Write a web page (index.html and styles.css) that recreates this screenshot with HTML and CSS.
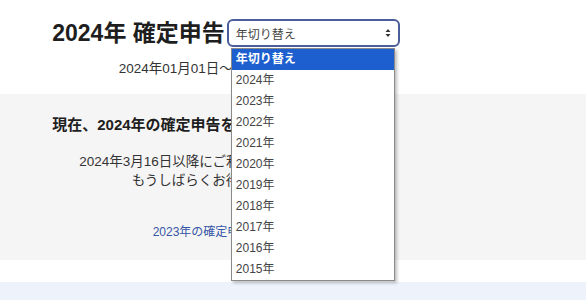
FILE: index.html
```html
<!DOCTYPE html>
<html lang="ja">
<head>
    <meta charset="UTF-8">
    <meta name="viewport" content="width=device-width, initial-scale=1.0">
    <title>2024年 確定申告</title>
    <link rel="stylesheet" href="styles.css">
</head>
<body>
    <div class="page">
        <!-- Header -->
        <div class="head">
            <div class="column">
                <div class="title-row">
                    <h1>2024年 確定申告</h1>
                    <div class="year-select">
                        <span class="year-select-label">年切り替え</span>
                        <svg class="year-select-arrow" width="6" height="10" viewBox="0 0 6 10">
                            <path d="M3 1 L5.5 4 L0.5 4 Z M3 9 L5.5 6 L0.5 6 Z" fill="#333"/>
                        </svg>
                        <ul class="year-menu">
                            <li class="selected">年切り替え</li>
                            <li>2024年</li>
                            <li>2023年</li>
                            <li>2022年</li>
                            <li>2021年</li>
                            <li>2020年</li>
                            <li>2019年</li>
                            <li>2018年</li>
                            <li>2017年</li>
                            <li>2016年</li>
                            <li>2015年</li>
                        </ul>
                    </div>
                </div>
                <p class="period">2024年01月01日～2024年12月31日</p>
            </div>
        </div>

        <!-- Notice -->
        <div class="notice">
            <div class="column">
                <h2>現在、2024年の確定申告を受け付けておりません。</h2>
                <p class="notice-text">2024年3月16日以降にご利用が可能となります。<br>もうしばらくお待ちください。</p>
                <a class="prev-link" href="#">2023年の確定申告はこちら</a>
            </div>
        </div>

        <div class="spacer"></div>
        <div class="band"></div>
    </div>
</body>
</html>
```

FILE: styles.css
```css
* { margin: 0; padding: 0; box-sizing: border-box; }

body {
    font-family: "Liberation Sans", "Noto Sans CJK JP", sans-serif;
    background: #fff;
    color: #222;
}

.column {
    width: 452px;
    text-align: center;
}

.head {
    padding: 19px 0 17px;
}

.title-row {
    display: flex;
    justify-content: center;
    align-items: center;
    gap: 2px;
}

.title-row h1 {
    font-size: 23px;
    font-weight: bold;
    line-height: 28px;
    color: #1e1e1e;
}

.year-select {
    position: relative;
    width: 173px;
    height: 28px;
    border: 2px solid #4a5f99;
    border-radius: 6px;
    background: #fff;
    display: flex;
    align-items: center;
    padding: 0 7px;
    text-align: left;
}

.year-select-label {
    flex: 1;
    font-size: 12px;
    color: #444;
}

.year-select-arrow {
    display: block;
}

.year-menu {
    position: absolute;
    top: 27px;
    left: 2px;
    width: 164px;
    list-style: none;
    background: #fff;
    border: 1px solid #8a8a8a;
    box-shadow: 2px 2px 3px rgba(0,0,0,0.25);
    z-index: 10;
}

.year-menu li {
    height: 21px;
    line-height: 21px;
    padding-left: 4px;
    font-size: 12px;
    color: #444;
}

.year-menu li.selected {
    background: #1d5fcf;
    color: #fff;
    font-weight: bold;
}

.period {
    margin-top: 14px;
    font-size: 13.5px;
    line-height: 16px;
    color: #333;
}

.notice {
    background: #f6f5f5;
    padding: 21px 0 20px;
}

.notice h2 {
    font-size: 15px;
    font-weight: bold;
    line-height: 20px;
    color: #1e1e1e;
}

.notice-text {
    margin-top: 17px;
    font-size: 13.5px;
    line-height: 19px;
    color: #333;
}

.prev-link {
    display: block;
    margin-top: 34px;
    font-size: 12px;
    line-height: 16px;
    color: #3556a6;
    text-decoration: none;
}

.spacer {
    height: 22px;
}

.band {
    height: 18px;
    background: #eef2fb;
}
```
